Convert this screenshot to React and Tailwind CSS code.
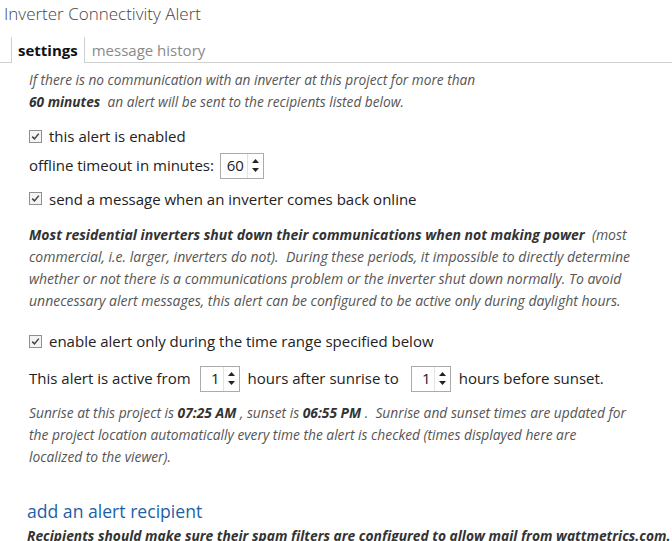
import React from "react";

function Check({label}) {
    return (
        <label className="flex items-center gap-[7px] text-[15px] text-[#222]">
            <span className="w-[13px] h-[13px] border border-[#8f8f8f] bg-[#f4f4f4] flex items-center justify-center">
                <svg width="9" height="9" viewBox="0 0 9 9" fill="none">
                    <path d="M1.2 4.6 L3.5 6.9 L7.8 1.6" stroke="#444" strokeWidth="1.5"/>
                </svg>
            </span>
            {label}
        </label>
    );
}

function Spinner({value, width}) {
    return (
        <span className={`inline-flex items-stretch h-[26px] border border-[#ababab] bg-white ${width}`}>
            <span className="flex-1 flex items-center justify-end pr-[3px] text-[15px] text-[#222]">{value}</span>
            <span className="w-[16px] flex flex-col justify-center items-center gap-[5px] border-l border-[#e2e2e2]">
                <svg width="7" height="4" viewBox="0 0 7 4"><path d="M0 4 L3.5 0 L7 4 Z" fill="#222"/></svg>
                <svg width="7" height="4" viewBox="0 0 7 4"><path d="M0 0 L7 0 L3.5 4 Z" fill="#222"/></svg>
            </span>
        </span>
    );
}

export default function App() {
    return (
        <div className="w-[672px] h-[541px] overflow-hidden bg-white font-['Open_Sans',sans-serif]">
            <h1 className="pl-[4px] pt-[2px] text-[17px] font-light text-[#444] leading-[24px]">Inverter Connectivity Alert</h1>
            <div className="mt-[11px] flex border-b border-[#cfcfcf] pl-[11px] h-[26px]">
                <div className="border-l border-r border-[#cfcfcf] bg-white -mb-px px-[6px] pt-[1px] text-[15px] font-bold text-[#111] leading-[24px]">settings</div>
                <div className="px-[7px] pt-[1px] text-[15px] text-[#8a8a8a] leading-[24px]">message history</div>
            </div>
            <div className="pl-[29px] pr-[10px]">
                <p className="mt-[6px] text-[13.7px] italic text-[#555] leading-[22px]">
                    If there is no communication with an inverter at this project for more than<br/>
                    <b className="text-[#333]">60 minutes</b>&nbsp; an alert will be sent to the recipients listed below.
                </p>
                <div className="mt-[12px]">
                    <Check label="this alert is enabled"/>
                </div>
                <div className="mt-[5px] flex items-center gap-[6px] text-[15px] text-[#222]">
                    offline timeout in minutes:
                    <Spinner value="60" width="w-[44px]"/>
                </div>
                <div className="mt-[9px]">
                    <Check label="send a message when an inverter comes back online"/>
                </div>
                <p className="mt-[14px] text-[14px] italic text-[#555] leading-[22px]">
                    <b className="text-[#333]">Most residential inverters shut down their communications when not making power</b>&nbsp; (most<br/>
                    commercial, i.e. larger, inverters do not).&nbsp; During these periods, it impossible to directly determine<br/>
                    whether or not there is a communications problem or the inverter shut down normally. To avoid<br/>
                    unnecessary alert messages, this alert can be configured to be active only during daylight hours.
                </p>
                <div className="mt-[18px]">
                    <Check label="enable alert only during the time range specified below"/>
                </div>
                <div className="mt-[13px] flex items-center text-[15px] text-[#222]">
                    <span>This alert is active from</span>
                    <span className="ml-[9px]"><Spinner value="1" width="w-[40px]"/></span>
                    <span className="ml-[8px]">hours after sunrise to</span>
                    <span className="ml-[12px]"><Spinner value="1" width="w-[40px]"/></span>
                    <span className="ml-[8px]">hours before sunset.</span>
                </div>
                <p className="mt-[10px] text-[13.8px] italic text-[#555] leading-[22px]">
                    Sunrise at this project is <b className="text-[#333]">07:25 AM</b> , sunset is <b className="text-[#333]">06:55 PM</b> .&nbsp; Sunrise and sunset times are updated for<br/>
                    the project location automatically every time the alert is checked (times displayed here are<br/>
                    localized to the viewer).
                </p>
            </div>
            <div className="pl-[27px] mt-[31px]">
                <div className="text-[17.6px] text-[#1d5fa8] leading-[24px]">add an alert recipient</div>
                <p className="mt-[2px] text-[13.8px] italic font-bold text-[#333] leading-[22px] whitespace-nowrap">
                    Recipients should make sure their spam filters are configured to allow mail from wattmetrics.com.
                </p>
            </div>
        </div>
    );
}
